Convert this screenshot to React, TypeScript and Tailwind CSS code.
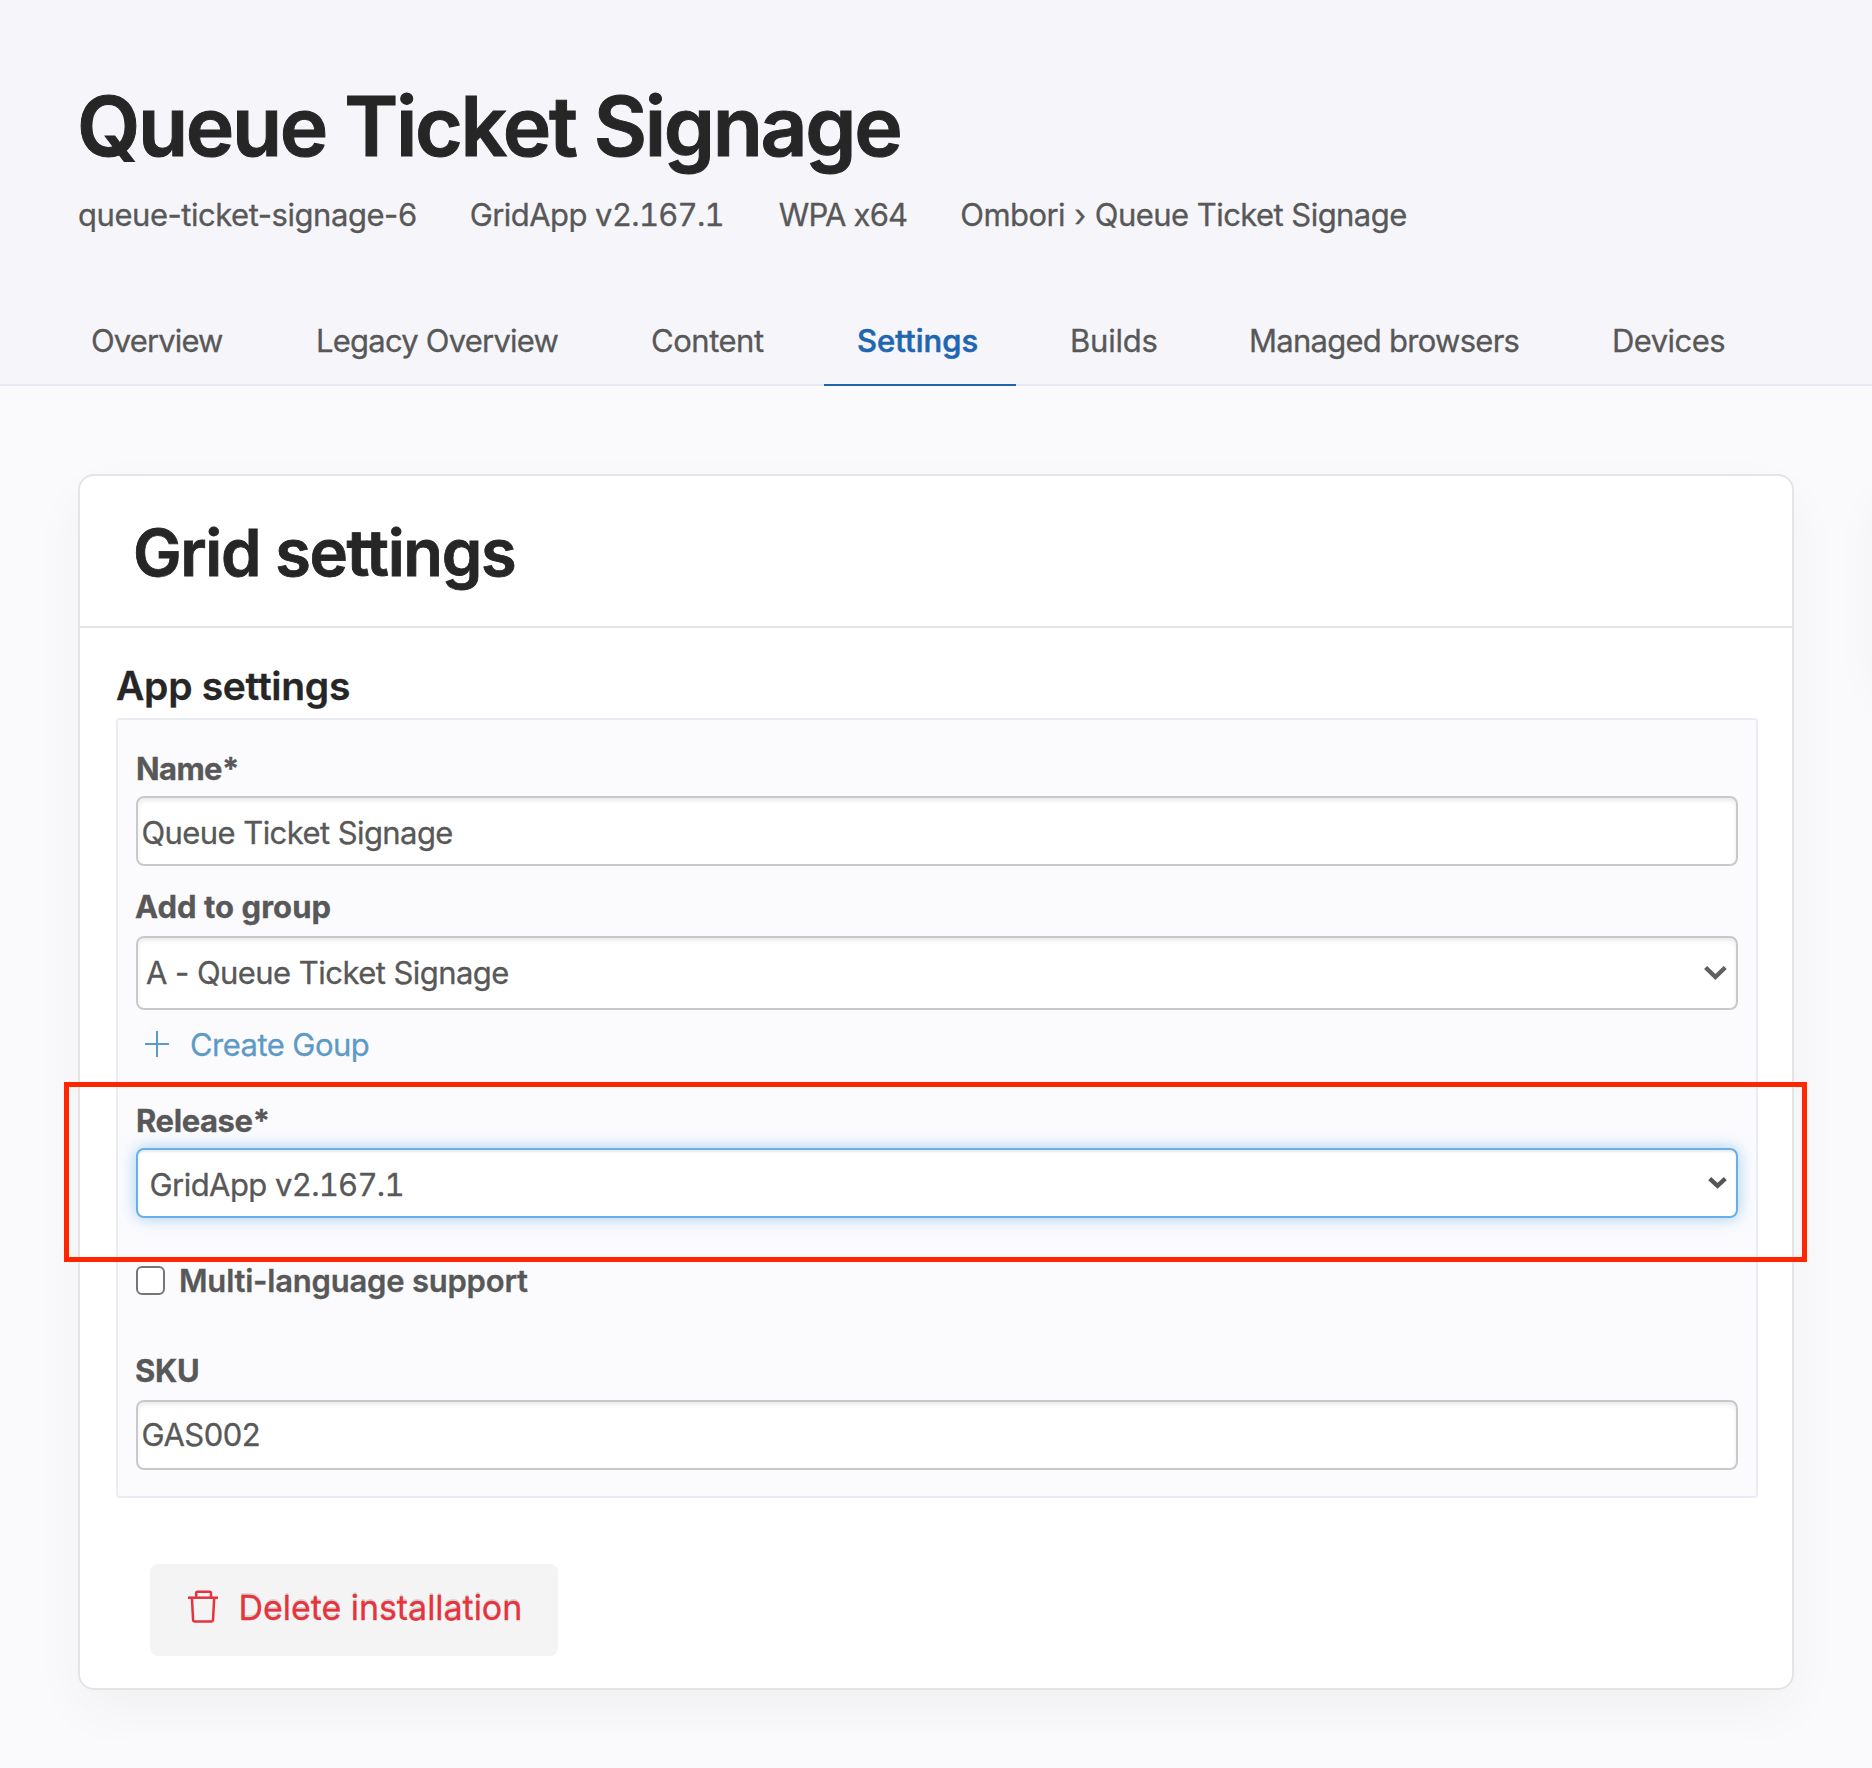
import React from "react";

const tabs = [
  { label: "Overview", box: "w-[205px] tracking-[-0.88px]" },
  { label: "Legacy Overview", box: "w-[315px] tracking-[-0.78px]" },
  { label: "Content", box: "w-[186px] tracking-[-0.47px]" },
  { label: "Settings", box: "mr-[1px] w-[192px] tracking-[0.05px]", active: true },
  { label: "Builds", box: "w-[159px] tracking-[-0.2px]" },
  { label: "Managed browsers", box: "w-[342px] tracking-[-0.73px]" },
  { label: "Devices", box: "ml-[1px] w-[190px] tracking-[-0.55px]" },
];

function Label({ className = "", children }: { className?: string; children: React.ReactNode }) {
  return <div className={`h-12 whitespace-pre font-bold leading-[48px] ${className}`}>{children}</div>;
}

function Field({ className = "", children }: { className?: string; children: React.ReactNode }) {
  return (
    <div
      className={`flex items-center justify-between whitespace-pre rounded-[8px] border-2 bg-white ${className}`}
    >
      {children}
    </div>
  );
}

function Version({ className = "" }: { className?: string }) {
  return (
    <span className={className}>
      <span className="tracking-[-0.55px]">GridApp v</span>
      <span className="tabular-nums tracking-[-0.75px]">2.167.1</span>
    </span>
  );
}

function TrashIcon() {
  return (
    <svg className="-mt-px" width="32" height="34" viewBox="0 0 32 34" fill="none" stroke="#e5343d" strokeWidth="2.5">
      <path d="M1 7.7H31" />
      <path d="M9.2 7.5V3.2a1.4 1.4 0 0 1 1.4-1.4H22.6a1.4 1.4 0 0 1 1.4 1.4V7.5" />
      <path d="M4.9 7.7L6.1 30.1a1.4 1.4 0 0 0 1.4 1.3H24.6a1.4 1.4 0 0 0 1.4-1.3L27.2 7.7" />
    </svg>
  );
}

export default function App() {
  return (
    <div className="h-[1768px] w-[1872px] overflow-hidden bg-[#fafafc] font-[Inter,sans-serif] text-[31px] text-[#585858] [-webkit-text-stroke:0.3px]">
      <header className="h-[386px] border-b-2 border-[#e8ebf5] bg-[#f5f5fa] pt-[77px]">
        <h1 className="pl-[77px] text-[82px] font-semibold leading-[100px] tracking-[-2.38px] text-[#262626] [-webkit-text-stroke:1px]">
          Queue Ticket Signage
        </h1>
        <div className="mt-[14px] flex whitespace-pre pl-[78px] leading-[48px]">
          <span className="tracking-[-0.46px]">queue-ticket-signage-6</span>
          <Version className="ml-[53px] w-[255px]" />
          <span className="ml-[54px] tracking-[-0.82px]">WPA x64</span>
          <span className="ml-[53px] tracking-[-0.55px]">
            Ombori <span className="mx-[1px]">›</span> Queue Ticket Signage
          </span>
        </div>
        <nav className="mt-[57px] flex gap-5 pl-[58px]">
          {tabs.map((t) => (
            <div
              key={t.label}
              className={`flex h-[90px] items-center whitespace-pre border-y-2 border-t-transparent pl-[33px] ${t.box} ${
                t.active ? "border-b-[#1f66b0] font-medium text-[#1f66b0] [-webkit-text-stroke:0.6px]" : "border-b-transparent"
              }`}
            >
              {t.label}
            </div>
          ))}
        </nav>
      </header>

      <main className="mt-[88px] flex items-start gap-[84px] pl-[78px]">
        <section className="w-[1716px] shrink-0 rounded-2xl border-2 border-[#e4e4e4] bg-white pb-8 shadow-[0_20px_52px_rgba(0,0,0,0.04)]">
          <div className="h-[152px] border-b-2 border-[#e4e4e4] pl-[53px] pt-[3px]">
            <h2 className="text-[65px] font-semibold leading-[148px] tracking-[-1.38px] text-[#262626] [-webkit-text-stroke:0.8px]">
              Grid settings
            </h2>
          </div>
          <div className="pl-9 pr-[34px] pt-[33px]">
            <h3 className="text-[39px] font-semibold leading-[50px] tracking-[-0.29px] text-[#262626]">
              App settings
            </h3>
            <div className="mt-[7px] rounded-[4px] border-2 border-[#e9ecf5] bg-[#fbfbfe] px-[18px] pb-[26px] pt-[25px]">
              <Label className="tracking-[-0.6px]">Name*</Label>
              <Field className="mt-[3px] h-[70px] border-[#c9c9c9] pl-[3.5px] pt-[4px] tracking-[-0.58px] shadow-[inset_0_3px_4px_rgba(0,0,0,0.08)]">
                Queue Ticket Signage
              </Field>

              <Label className="-ml-px mt-[17px] tracking-[0.04px]">Add to group</Label>
              <Field className="mt-[5px] h-[74px] border-[#c9c9c9] pl-[8px] tracking-[-0.55px] shadow-[inset_0_3px_4px_rgba(0,0,0,0.08)]">
                A - Queue Ticket Signage
                <svg className="mr-[9px]" width="23" height="15" viewBox="0 0 23 15" fill="none" stroke="#606060" strokeWidth="4.4">
                  <path d="M1.6 1.5L11.4 11L21.2 1.5" />
                </svg>
              </Field>

              <div className="mt-[10px] flex h-[49px] items-center gap-[21px] pl-[9px] tracking-[-0.55px] text-[#5e9ac6]">
                <svg className="-mt-px" width="24" height="26" viewBox="0 0 24 26" fill="none" stroke="currentColor" strokeWidth="2">
                  <path d="M0 13H24M12 0V26" />
                </svg>
                <div className="pt-[2px]">Create Goup</div>
              </div>

              <div className="relative mt-7">
                <Label className="tracking-[-0.4px]">Release*</Label>
                <Field className="mt-[3px] h-[70px] border-[#66afe9] pl-[11.5px] pt-[4px] shadow-[inset_0_2px_2px_rgba(0,0,0,0.075),0_0_16px_rgba(102,175,233,0.6)]">
                  <Version />
                  <svg className="mb-[4px] mr-[9px]" width="19" height="12" viewBox="0 0 19 12" fill="none" stroke="#555555" strokeWidth="4.4">
                    <path d="M1.7 1.7L9.5 8.8L17.3 1.7" />
                  </svg>
                </Field>
                <div className="pointer-events-none absolute -bottom-[44px] -left-[72px] -right-[69px] -top-[15px] border-[5px] border-[#ff2600]" />
              </div>

              <div className="mt-[38px] flex h-[49px] items-center">
                <div className="h-[29px] w-[29px] rounded-[6px] border-2 border-[#767676] bg-white" />
                <div className="pl-[14px] pt-[2px] font-semibold tracking-[-0.22px]">Multi-language support</div>
              </div>

              <Label className="-ml-px mt-[42px] tracking-[-0.3px]">SKU</Label>
              <Field className="mt-[5px] h-[70px] border-[#c9c9c9] pl-[3.5px] tracking-[-0.5px] shadow-[inset_0_3px_4px_rgba(0,0,0,0.08)]">
                GAS002
              </Field>
            </div>

            <button className="ml-[34px] mt-[66px] flex h-[92px] w-[408px] items-center rounded-[8px] bg-[#f4f4f4] pb-[6px] pl-[37px] text-[34px] text-[#e5343d]">
              <TrashIcon />
              <div className="pl-[19.5px] tracking-[-0.05px] [text-shadow:0_-2px_0_rgba(0,0,0,0.12)]">
                Delete installation
              </div>
            </button>
          </div>
        </section>
        <aside className="h-[206px] w-[400px] shrink-0 rounded-2xl bg-white shadow-[0_20px_52px_rgba(0,0,0,0.04)]" />
      </main>
    </div>
  );
}
